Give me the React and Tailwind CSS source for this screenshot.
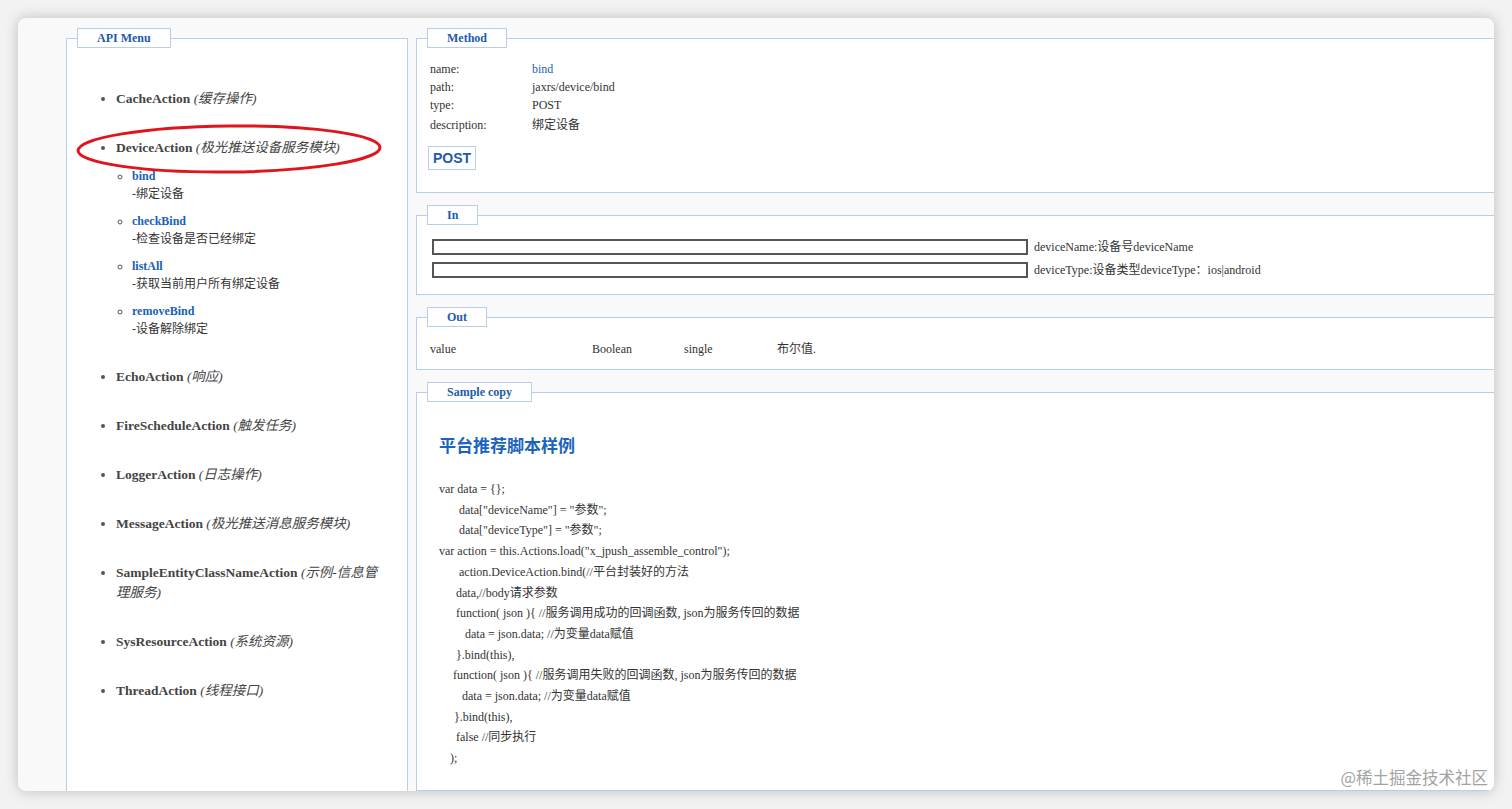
const serif = "font-['Liberation_Serif','Noto_Sans_CJK_SC',serif]";

const menu = [
  { name: 'CacheAction', cn: '(缓存操作)' },
  {
    name: 'DeviceAction',
    cn: '(极光推送设备服务模块)',
    subs: [
      { name: 'bind', desc: '-绑定设备' },
      { name: 'checkBind', desc: '-检查设备是否已经绑定' },
      { name: 'listAll', desc: '-获取当前用户所有绑定设备' },
      { name: 'removeBind', desc: '-设备解除绑定' },
    ],
  },
  { name: 'EchoAction', cn: '(响应)' },
  { name: 'FireScheduleAction', cn: '(触发任务)' },
  { name: 'LoggerAction', cn: '(日志操作)' },
  { name: 'MessageAction', cn: '(极光推送消息服务模块)' },
  { name: 'SampleEntityClassNameAction', cn: '(示例-信息管理服务)' },
  { name: 'SysResourceAction', cn: '(系统资源)' },
  { name: 'ThreadAction', cn: '(线程接口)' },
];

const code = [
  { t: 'var data = {};', c: 'pl-0' },
  { t: 'data["deviceName"] = "参数";', c: 'pl-[20px]' },
  { t: 'data["deviceType"] = "参数";', c: 'pl-[20px]' },
  { t: 'var action = this.Actions.load("x_jpush_assemble_control");', c: 'pl-0' },
  { t: 'action.DeviceAction.bind(//平台封装好的方法', c: 'pl-[20px]' },
  { t: 'data,//body请求参数', c: 'pl-[17px]' },
  { t: 'function( json ){ //服务调用成功的回调函数, json为服务传回的数据', c: 'pl-[17px]' },
  { t: 'data = json.data; //为变量data赋值', c: 'pl-[26px]' },
  { t: '}.bind(this),', c: 'pl-[17px]' },
  { t: 'function( json ){ //服务调用失败的回调函数, json为服务传回的数据', c: 'pl-[14px]' },
  { t: 'data = json.data; //为变量data赋值', c: 'pl-[23px]' },
  { t: '}.bind(this),', c: 'pl-[15px]' },
  { t: 'false //同步执行', c: 'pl-[17px]' },
  { t: ');', c: 'pl-[11px]' },
];

function Box({ title, className = '', children }) {
  return (
    <fieldset className={`border border-[#b7cfec] bg-white ${className}`}>
      <legend className="ml-[10px] border border-[#b7cfec] bg-white px-[19px] text-[12px] font-bold leading-[18px] text-[#1d5bab]">
        {title}
      </legend>
      {children}
    </fieldset>
  );
}

export default function App() {
  return (
    <div className={`relative h-[809px] w-[1512px] overflow-hidden bg-[#f2f2f2] p-[18px] ${serif}`}>
      <div className="flex h-[773px] w-[1476px] gap-[8px] overflow-hidden rounded-[8px] bg-[#f9f9f9] pl-[48px] pt-[10px] shadow-[0_0_14px_rgba(0,0,0,0.22)]">
        {/* left menu */}
        <Box title="API Menu" className="h-[790px] w-[342px] shrink-0">
          <ul className="list-disc pb-4 pl-[49px] pr-[20px] pt-[41px] text-[13.5px] leading-[20px] text-[#444] marker:text-[#555]">
            {menu.map(m => (
              <li key={m.name} className="mb-[29px]">
                <span className="font-bold">{m.name}</span> <i>{m.cn}</i>
                {m.subs && (
                  <ul className="mt-[9px] list-[circle] pl-[16px] text-[12px] leading-[18px]">
                    {m.subs.map(s => (
                      <li key={s.name} className="mb-[9px] last:mb-[1px]">
                        <div className="font-bold text-[#1b5fb8]">{s.name}</div>
                        <div className="text-[#333]">{s.desc}</div>
                      </li>
                    ))}
                  </ul>
                )}
              </li>
            ))}
          </ul>
        </Box>

        {/* right column */}
        <div className="flex w-[1100px] shrink-0 flex-col gap-[12px]">
          <Box title="Method">
            <div className="pb-[22px] pl-[13px]">
              <div className="pt-[12px] text-[12px] leading-[18px] text-[#333]">
                <div className="flex"><span className="w-[102px]">name:</span><span className="text-[#1b5fb8]">bind</span></div>
                <div className="flex"><span className="w-[102px]">path:</span><span>jaxrs/device/bind</span></div>
                <div className="flex"><span className="w-[102px]">type:</span><span>POST</span></div>
                <div className="flex pt-[1px] leading-[20px]"><span className="w-[102px]">description:</span><span>绑定设备</span></div>
              </div>
              <button className="-ml-[2px] mt-[11px] h-[24px] w-[48px] border border-[#b7cfec] bg-white font-['Liberation_Sans',sans-serif] text-[14px] font-bold leading-[20px] text-[#1d5bab]">
                POST
              </button>
            </div>
          </Box>

          <Box title="In">
            <div className="flex flex-col gap-[7px] pb-[16px] pl-[15px] pt-[14px] text-[12px] leading-[16px] text-[#333]">
              <div className="flex h-[16px] items-center gap-[6px]">
                <input className="h-[16px] w-[596px] border-2 border-[#555] bg-white" />
                <span>deviceName:设备号deviceName</span>
              </div>
              <div className="flex h-[16px] items-center gap-[6px]">
                <input className="h-[16px] w-[596px] border-2 border-[#555] bg-white" />
                <span>deviceType:设备类型deviceType：ios|android</span>
              </div>
            </div>
          </Box>

          <Box title="Out">
            <div className="flex pb-[12px] pl-[13px] pt-[14px] text-[12px] leading-[16px] text-[#333]">
              <span className="w-[162px]">value</span>
              <span className="w-[92px]">Boolean</span>
              <span className="w-[93px]">single</span>
              <span>布尔值.</span>
            </div>
          </Box>

          <Box title="Sample copy" className="h-[420px]">
            <div className="pl-[22px]">
              <h2 className="pt-[34px] text-[17px] font-bold leading-[22px] text-[#1a63be]">平台推荐脚本样例</h2>
              <div className="pt-[21px] text-[12px] leading-[20.7px] text-[#333]">
                {code.map((l, i) => (
                  <div key={i} className={l.c}>{l.t}</div>
                ))}
              </div>
            </div>
          </Box>
        </div>
      </div>

      {/* annotation ellipse */}
      <svg className="absolute left-[74px] top-[122px] h-[56px] w-[312px]" viewBox="0 0 312 56">
        <ellipse cx="155" cy="27" rx="151" ry="23" fill="none" stroke="#e0141c" strokeWidth="3" transform="rotate(-0.6 155 27)" />
      </svg>

      {/* watermark */}
      <div className="absolute bottom-[22px] right-[24px] font-['Noto_Sans_CJK_SC',sans-serif] text-[16.5px] leading-[20px] text-[#a3a3a3]">
        @稀土掘金技术社区
      </div>
    </div>
  );
}
